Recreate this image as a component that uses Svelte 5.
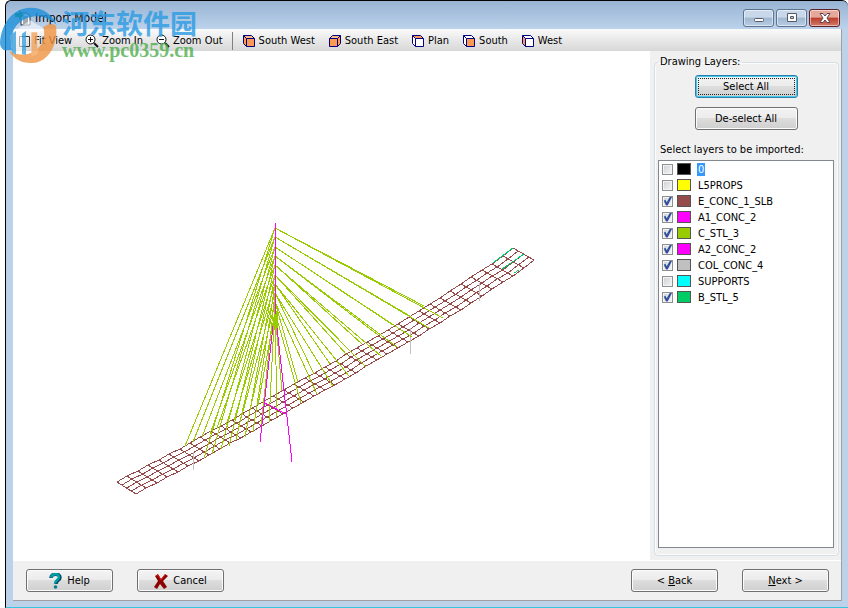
<script>
  // Import Model dialog: 3D preview on the left, drawing layers on the right.
  let layers = $state([
    { name: "0", color: "#000000", on: false },
    { name: "L5PROPS", color: "#ffff00", on: false },
    { name: "E_CONC_1_SLB", color: "#964b4b", on: true },
    { name: "A1_CONC_2", color: "#ff00ff", on: true },
    { name: "C_STL_3", color: "#99cc00", on: true },
    { name: "A2_CONC_2", color: "#ff00ff", on: true },
    { name: "COL_CONC_4", color: "#c0c0c0", on: true },
    { name: "SUPPORTS", color: "#00ffff", on: false },
    { name: "B_STL_5", color: "#00cc66", on: true },
  ]);
  let current = $state("0");

  function setAll(on) {
    for (const l of layers) l.on = on;
  }

  // cube views: filled face per direction
  const views = [
    { name: "South West", face: "M4 4H12V12H4ZM1 1L4 4V12L1 9Z", solid: true },
    { name: "South East", face: "M1 4H9V12H1ZM9 4L12 1V9L9 12Z", flip: true, solid: true },
    { name: "Plan", face: "M1 1H9L12 4H4Z" },
    { name: "South", face: "M4 4H12V12H4Z" },
    { name: "West", face: "M1 1L4 4V12L1 9Z" },
  ];

  // deck, far edge in screen space
  const edge = [[117, 482], [185, 446], [263, 402], [332, 363], [362, 345], [393, 327], [424, 308], [493, 263], [513, 248]];
  const SEGS = 38;

  function deckPoint(t, w) {
    const x = 117 + 396 * t;
    let i = 0;
    while (i < edge.length - 2 && edge[i + 1][0] < x) i++;
    const [x0, y0] = edge[i];
    const [x1, y1] = edge[i + 1];
    const y = y0 + ((x - x0) / (x1 - x0)) * (y1 - y0);
    return [x + w * (19 + 2 * t), y + w * 12];
  }

  const girders = [0, 1, 2, 3, 4].map((k) =>
    "M" + Array.from({ length: SEGS + 1 }, (_, i) => deckPoint(i / SEGS, k / 4).map(Math.round).join(" ")).join("L")
  );
  const beams = Array.from({ length: SEGS + 1 }, (_, i) => {
    const a = deckPoint(i / SEGS, 0).map(Math.round);
    const b = deckPoint(i / SEGS, 1).map(Math.round);
    return `M${a.join(" ")}L${b.join(" ")}`;
  });

  // near-side anchors, outermost first; the far side is one deck width away
  const leftAnchors = [[204, 458], [212, 454], [221, 449], [229, 446], [236, 440], [245, 437], [253, 432], [261, 427], [269, 422], [277, 417]];
  const rightAnchors = [[443, 318], [429, 328], [412, 337], [397, 347], [381, 356], [366, 367], [349, 376], [333, 386], [317, 394], [301, 403]];
  const cables = [leftAnchors, rightAnchors]
    .flatMap((side) => side.map(([x, y], i) => {
      const top = Math.round(228 + i * 9.3);
      return `M275 ${top}L${x} ${y}M275 ${top}L${x - 19} ${y - 12}`;
    }))
    .join("");
</script>

<main class="window">
  <header class="titlebar">
    <svg class="app-icon" width="16" height="16" viewBox="0 0 16 16">
      <path d="M6 3H12L15 6V15H6Z" fill="#fff" stroke="#234" />
      <path d="M8 7H13M8 9H13M8 11H13M8 13H13" stroke="#456" />
      <path d="M0 3H4V0L9 5L4 10V7H0Z" fill="#00884c" />
    </svg>
    <h1>Import Model</h1>
    <div class="controls">
      <button aria-label="Minimize">
        <svg width="12" height="12" viewBox="0 0 12 12"><rect x="1.5" y="6.5" width="9" height="3" rx="1" fill="#fff" stroke="#555b66" /></svg>
      </button>
      <button aria-label="Maximize">
        <svg width="12" height="12" viewBox="0 0 12 12"><path d="M1.5 1.5H10.5V9.5H1.5ZM4.5 4.5V6.5H7.5V4.5Z" fill="#fff" fill-rule="evenodd" stroke="#555b66" /></svg>
      </button>
      <button class="close" aria-label="Close">
        <svg width="12" height="12" viewBox="0 0 12 12"><path d="M1 1.5H4L6 4L8 1.5H11L8 6L11 10.5H8L6 8L4 10.5H1L4 6Z" fill="#fff" stroke="#5b4650" /></svg>
      </button>
    </div>
  </header>

  <div class="client">
    <nav class="toolbar">
      <button class="tool">
        <svg width="13" height="13" viewBox="0 0 13 13"><path d="M1.5 1.5H11.5V11.5H1.5Z" fill="none" stroke="#33383d" /></svg>
        Fit View
      </button>
      {#each ["Zoom In", "Zoom Out"] as z}
        <button class="tool">
          <svg width="14" height="14" viewBox="0 0 14 14">
            <circle cx="5.5" cy="5.5" r="4.5" fill="#fff" stroke="#111" />
            <path d="M3 5.5H8" stroke="#111" />
            {#if z === "Zoom In"}<path d="M5.5 3V8" stroke="#111" />{/if}
            <path d="M9 9L13 13" stroke="#111" stroke-width="2" />
          </svg>
          {z}
        </button>
      {/each}
      <span class="sep"></span>
      {#each views as v}
        <button class="tool cube">
          <svg width="13" height="13" viewBox="0 0 13 13">
            <g transform="translate(.5 .5)">
              <path d="M0 0H8L11 3V11H3L0 8Z" fill={v.solid ? "#ffb784" : "#fff"} transform={v.flip ? "matrix(-1 0 0 1 11 0)" : null} />
              <path d={v.face} fill="#ff9a55" transform="translate(-1 -1)" />
              {#if v.flip}
                <path d="M0 3H8V11H0ZM0 3L3 0H11L8 3M11 0V8L8 11" fill="none" stroke="#000080" />
              {:else}
                <path d="M3 3H11V11H3ZM3 3L0 0H8L11 3M0 0V8L3 11" fill="none" stroke="#000080" />
              {/if}
            </g>
          </svg>
          {v.name}
        </button>
      {/each}
    </nav>

    <div class="body">
      <section class="view" aria-label="Model preview">
        <svg class="model" viewBox="13 51 637 510" preserveAspectRatio="xMidYMid meet" fill="none" shape-rendering="crispEdges">
          <g stroke="#964b4b">
            {#each girders as d}<path {d} />{/each}
            {#each beams as d}<path {d} />{/each}
          </g>
          <path d="M410.5 328V354M479.5 283V301M193.5 452V470" stroke="#c0c0c0" />
          <path d={cables} stroke="#99cc00" />
          <path d="M275.5 311V330" stroke="#99cc00" stroke-width="4" />
          <path d="M493 263L513 248M502 269L524 254M514 273L519 270" stroke="#00cc66" />
          <path d="M275.5 223V314M273 326L260 442M277 328L292 462M265 403L286 414" stroke="#ff00ff" />
        </svg>
      </section>

      <aside class="side">
        <fieldset>
          <legend>Drawing Layers:</legend>
          <button class="btn focused" onclick={() => setAll(true)}>Select All</button>
          <button class="btn" onclick={() => setAll(false)}>De-select All</button>
          <p id="layers-label">Select layers to be imported:</p>
          <div class="list" role="group" aria-labelledby="layers-label">
            {#each layers as l (l.name)}
              <label>
                <input type="checkbox" bind:checked={l.on} onfocus={() => (current = l.name)} />
                <span class="swatch" style:background={l.color}></span>
                <span class="name" class:current={current === l.name}>{l.name}</span>
              </label>
            {/each}
          </div>
        </fieldset>
      </aside>
    </div>

    <footer>
      <button class="btn">
        <svg width="13" height="16" viewBox="0 0 13 16">
          <path d="M2 5C2 0 11 0 11 4.500C11 7.500 7 7 7 11" fill="none" stroke="#064a60" stroke-width="3.500" />
          <path d="M2 4.500C3 0 10 0 10 4C10 7 6 7 6 10.500" fill="none" stroke="#00a0a8" stroke-width="2.500" />
          <circle cx="6.500" cy="14" r="1.800" fill="#067c90" />
        </svg>
        Help
      </button>
      <button class="btn">
        <svg width="14" height="15" viewBox="0 0 14 15">
          <path d="M1 2L4 0L7 5L11 0L14 2L9 7L13 13L10 15L6 10L3 15L0 13L4 7Z" fill="#8c0000" />
          <path d="M2 2L4 1L7 6L11 1" fill="none" stroke="#dc1818" />
        </svg>
        Cancel
      </button>
      <button class="btn back"><span>&lt; <u>B</u>ack</span></button>
      <button class="btn"><span><u>N</u>ext &gt;</span></button>
    </footer>
  </div>

  <div class="mark">
    <svg width="58" height="60" viewBox="0 0 174 180">
      <path d="M0 108C4 45 42 2 92 2C130 2 160 24 170 54C148 32 120 24 92 30C56 38 32 66 34 108C34 118 34 124 38 130H12C4 124 0 116 0 108Z" fill="#1e90da" />
      <path d="M168 56C176 116 142 166 98 168C66 170 40 156 28 132C52 146 78 146 100 134C128 118 138 88 130 60C146 50 158 48 168 56Z" fill="#f09340" />
      <path d="M44 72L90 40L128 62V72L112 76V134L94 140V76L80 68L66 80V138H44Z" fill="#fff" fill-opacity=".7" />
      <path d="M30 84L48 72V144L36 136Z" fill="#3ea5df" />
      <path d="M66 80L78 72V144L66 142Z" fill="#3ea5df" />
      <path d="M94 76L112 76V142L94 150Z" fill="#f3a45c" />
    </svg>
    <div class="mark-text">
      <strong>河东软件园</strong>
      <span>www.pc0359.cn</span>
    </div>
  </div>
</main>

<style>
  :global(body) { background: #fff; }
  .window { position: relative; min-height: 100vh; margin-left: 5px; box-sizing: border-box; display: flex; flex-direction: column;
    padding: 0 6px 6px 7px; border: 1px solid #000; border-right: none; border-bottom-color: #35c5dc; border-radius: 6px 6px 0 0;
    background: linear-gradient(#98b4d3, #bcd2eb 28px); color: #000; font: 11px/16px "DejaVu Sans Condensed", Roboto, sans-serif; }
  button { font: inherit; color: inherit; margin: 0; }

  .titlebar { display: flex; align-items: center; height: 28px; padding-top: 5px; box-sizing: border-box; gap: 4px; }
  .app-icon { margin-left: 2px; }
  h1 { margin: 0; font-size: 12px; font-weight: 400; }
  .controls { margin: 0 2px 0 auto; display: flex; gap: 2px; }
  .controls button { width: 31px; height: 18px; padding: 0; display: grid; place-items: center; border: 1px solid #5d7490; border-radius: 3px;
    box-shadow: inset 0 0 0 1px #ffffff80; background: linear-gradient(#c8d8ea 45%, #a0b7d0 50%, #b8cee6); }
  .controls .close { border-color: #60202a; background: linear-gradient(#e5a89b 45%, #bd3e2b 50%, #d27b68); }

  .client { flex: 1; display: flex; flex-direction: column; background: #f0f0f0; border: solid #a0a0a0; border-width: 0 1px 1px 0; }
  .toolbar { display: flex; align-items: center; height: 22px; padding: 2px 0 0 5px; box-sizing: border-box; background: linear-gradient(#fafafa, #d7d7d7); }
  .tool { display: flex; align-items: center; gap: 3px; padding: 0 13px 0 0; border: none; background: none; white-space: nowrap; }
  .cube { padding-right: 14px; }
  .sep { width: 1px; height: 18px; margin: 0 10px 0 -4px; background: #808080; }

  .body { flex: 1; display: flex; }
  .view { flex: 1; display: flex; background: #fff; }
  .model { width: 100%; }
  .side { width: 191px; box-sizing: border-box; display: flex; padding: 3px 2px 4px 4px; border-bottom: 1px solid #fff; }
  fieldset { flex: 1; min-width: 0; margin: 0; padding: 5px 4px 7px 3px; display: flex; flex-direction: column; border: 1px solid #d3dfe5; border-radius: 4px; box-shadow: inset 0 0 0 1px #fafcfd; }
  legend { padding: 0 2px; margin-left: 0; }

  .btn { display: flex; align-items: center; justify-content: center; gap: 5px; width: 87px; height: 23px; padding: 1px 0 0; border: 1px solid #707070; border-radius: 3px;
    box-shadow: inset 0 0 0 1px #fcfcfc; background: linear-gradient(#f3f3f3, #ebebeb 50%, #dddddd 50%, #cfcfcf); }
  fieldset .btn { align-self: center; width: 103px; flex: none; margin-bottom: 9px; }
  .focused { border-color: #2c7ea8; box-shadow: inset 0 0 0 1px #43c8ee; outline: 1px dotted #222; outline-offset: -4px; }
  fieldset p { margin: 3px 2px 2px; white-space: nowrap; }
  .list { flex: 1; border: 1px solid #828790; background: #fff; }
  label { display: flex; align-items: center; height: 16px; padding-left: 3px; }
  input { appearance: none; flex: none; width: 11px; height: 11px; margin: 0 4px 0 0; box-sizing: border-box; border: 1px solid #8e8f8f; background: linear-gradient(135deg, #cbcfd5, #f6f6f6); box-shadow: inset 0 0 0 1px #f4f4f4; }
  input:checked::after { content: ""; display: block; width: 9px; height: 9px; background: #314f9a; clip-path: polygon(8% 45%, 28% 40%, 42% 65%, 78% 0, 100% 5%, 52% 100%, 34% 100%); }
  .swatch { flex: none; width: 14px; height: 12px; box-sizing: border-box; border: 1px solid #555; margin-right: 6px; }
  .name { line-height: 13px; padding: 0 1px; }
  .current { background: #3399ff; color: #fff; }

  footer { display: flex; gap: 24px; padding: 8px 12px 8px 13px; }
  .back { margin-left: auto; }

  .mark { position: absolute; left: -6px; top: 6px; display: flex; gap: 4px; pointer-events: none; opacity: .8; }
  .mark-text { display: flex; flex-direction: column; color: #2b9be2; }
  .mark strong { font: 700 27px/32px "Noto Sans CJK SC", sans-serif; }
  .mark span { font: 700 20px/22px "Liberation Serif", serif; color: #4fb050; }
</style>
